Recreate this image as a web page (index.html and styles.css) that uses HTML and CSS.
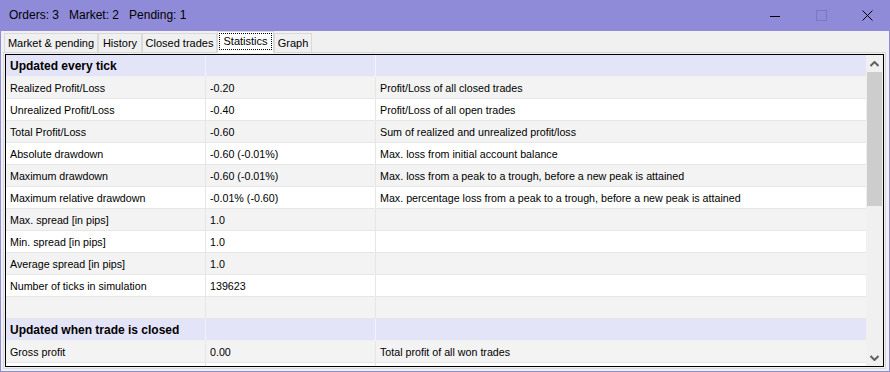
FILE: index.html
```html
<!DOCTYPE html>
<html lang="en">

<head>
    <meta charset="UTF-8">
    <title>Statistics</title>
    <link rel="stylesheet" href="styles.css">
</head>

<body>
    <div class="window">
        <!-- barra de titulo -->
        <div class="titlebar">
            <div class="title">
                <span>Orders: 3</span>
                <span>Market: 2</span>
                <span>Pending: 1</span>
            </div>
            <div class="caption">
                <div class="cbtn">
                    <svg width="10" height="10" viewBox="0 0 10 10"><path d="M0 5.5H10" stroke="#000" stroke-width="1"/></svg>
                </div>
                <div class="cbtn">
                    <svg width="11" height="11" viewBox="0 0 11 11"><rect x="0.5" y="0.5" width="10" height="10" fill="none" stroke="#7b78bf" stroke-width="1"/></svg>
                </div>
                <div class="cbtn">
                    <svg width="11" height="11" viewBox="0 0 11 11"><path d="M0.5 0.5L10.5 10.5M10.5 0.5L0.5 10.5" stroke="#000" stroke-width="1"/></svg>
                </div>
            </div>
        </div>

        <div class="content">
            <!-- abas -->
            <div class="tabs">
                <div class="tab w1">Market &amp; pending</div>
                <div class="tab w2">History</div>
                <div class="tab w3">Closed trades</div>
                <div class="tab active w4"><span class="focus">Statistics</span></div>
                <div class="tab w5">Graph</div>
            </div>

            <div class="panel">
                <div class="inner">
                    <div class="grid">
                        <div class="row head"><div class="cell">Updated every tick</div><div class="cell"></div><div class="cell"></div></div>
                        <div class="row alt"><div class="cell">Realized Profit/Loss</div><div class="cell">-0.20</div><div class="cell">Profit/Loss of all closed trades</div></div>
                        <div class="row"><div class="cell">Unrealized Profit/Loss</div><div class="cell">-0.40</div><div class="cell">Profit/Loss of all open trades</div></div>
                        <div class="row alt"><div class="cell">Total Profit/Loss</div><div class="cell">-0.60</div><div class="cell">Sum of realized and unrealized profit/loss</div></div>
                        <div class="row"><div class="cell">Absolute drawdown</div><div class="cell">-0.60 (-0.01%)</div><div class="cell">Max. loss from initial account balance</div></div>
                        <div class="row alt"><div class="cell">Maximum drawdown</div><div class="cell">-0.60 (-0.01%)</div><div class="cell">Max. loss from a peak to a trough, before a new peak is attained</div></div>
                        <div class="row"><div class="cell">Maximum relative drawdown</div><div class="cell">-0.01% (-0.60)</div><div class="cell">Max. percentage loss from a peak to a trough, before a new peak is attained</div></div>
                        <div class="row alt"><div class="cell">Max. spread [in pips]</div><div class="cell">1.0</div><div class="cell"></div></div>
                        <div class="row"><div class="cell">Min. spread [in pips]</div><div class="cell">1.0</div><div class="cell"></div></div>
                        <div class="row alt"><div class="cell">Average spread [in pips]</div><div class="cell">1.0</div><div class="cell"></div></div>
                        <div class="row"><div class="cell">Number of ticks in simulation</div><div class="cell">139623</div><div class="cell"></div></div>
                        <div class="row alt"><div class="cell"></div><div class="cell"></div><div class="cell"></div></div>
                        <div class="row head"><div class="cell">Updated when trade is closed</div><div class="cell"></div><div class="cell"></div></div>
                        <div class="row alt"><div class="cell">Gross profit</div><div class="cell">0.00</div><div class="cell">Total profit of all won trades</div></div>
                        <div class="row"><div class="cell"></div><div class="cell"></div><div class="cell"></div></div>
                    </div>

                    <!-- barra de rolagem -->
                    <div class="scrollbar">
                        <div class="arrow">
                            <svg width="9" height="6" viewBox="0 0 9 6"><path d="M0.5 5L4.5 1L8.5 5" fill="none" stroke="#606060" stroke-width="2"/></svg>
                        </div>
                        <div class="track"><div class="thumb"></div></div>
                        <div class="arrow">
                            <svg width="9" height="6" viewBox="0 0 9 6"><path d="M0.5 1L4.5 5L8.5 1" fill="none" stroke="#606060" stroke-width="2"/></svg>
                        </div>
                    </div>
                </div>
            </div>
        </div>
    </div>
</body>

</html>
```

FILE: styles.css
```css
body {
    margin: 0;
    font-family: "Liberation Sans", Arial, sans-serif;
    font-size: 10.7px;
    color: #000;
    overflow: hidden;
}

.window {
    width: 890px;
    height: 372px;
    display: flex;
    flex-direction: column;
    background-color: #8f8bd9;
    overflow: hidden;
}

.titlebar {
    height: 31px;
    display: flex;
    justify-content: space-between;
    align-items: center;
    flex-shrink: 0;
}

.title {
    margin-left: 9px;
    font-size: 12px;
    display: flex;
    gap: 10px;
    padding-bottom: 1px;
}

.caption {
    display: flex;
    height: 31px;
}

.cbtn {
    width: 46px;
    height: 31px;
    display: flex;
    align-items: center;
    justify-content: center;
}

.content {
    flex: 1;
    min-height: 0;
    margin: 0 1px 1px 1px;
    background-color: #f0f0f0;
    padding: 0 3px 2px 2px;
    display: flex;
    flex-direction: column;
}

.tabs {
    height: 21px;
    flex-shrink: 0;
    display: flex;
    align-items: flex-end;
    padding-left: 1px;
    position: relative;
    z-index: 1;
}

.tab {
    height: 19px;
    box-sizing: border-box;
    border: 1px solid #d9d9d9;
    border-bottom: none;
    background-color: #f0f0f0;
    display: flex;
    align-items: center;
    justify-content: center;
    padding-bottom: 1px;
    font-size: 11px;
}

.tab.active {
    height: 22px;
    margin-bottom: -1px;
    background-color: #fff;
    border-color: #d9d9d9;
    padding-bottom: 3px;
}

.focus {
    border: 1px dotted #000;
    padding: 1px 3px 2px 3px;
}

.w1 { width: 94px; }
.w2 { width: 44px; }
.w3 { width: 75px; }
.w4 { width: 57px; }
.w5 { width: 38px; }

.panel {
    flex: 1;
    min-height: 0;
    border: 1px solid #d9d9d9;
    padding: 1px;
    display: flex;
}

.inner {
    flex: 1;
    min-height: 0;
    border: 1px solid #000;
    display: flex;
    overflow: hidden;
    background-color: #fff;
}

.grid {
    width: 860px;
    overflow: hidden;
}

.row {
    display: grid;
    grid-template-columns: 200px 170px 490px;
    height: 22px;
    box-sizing: border-box;
    border-bottom: 1px solid #e6e6e6;
    background-color: #fff;
}

.row.alt {
    background-color: #f3f3f3;
}

.row.head {
    background-color: #e4e4f8;
    font-weight: bold;
    font-size: 12px;
    border-bottom-color: #f0f0f0;
}

.cell {
    border-right: 1px solid #e6e6e6;
    padding: 1px 0 0 4px;
    line-height: 21px;
    white-space: nowrap;
    overflow: hidden;
}

.row.head .cell {
    border-right-color: #f2f2fb;
}

.cell:last-child {
    border-right: none;
}

.scrollbar {
    width: 17px;
    flex-shrink: 0;
    background-color: #f0f0f0;
    display: flex;
    flex-direction: column;
}

.arrow {
    height: 17px;
    display: flex;
    align-items: center;
    justify-content: center;
}

.track {
    flex: 1;
    padding: 0 1px;
}

.thumb {
    height: 134px;
    background-color: #cdcdcd;
}
```
